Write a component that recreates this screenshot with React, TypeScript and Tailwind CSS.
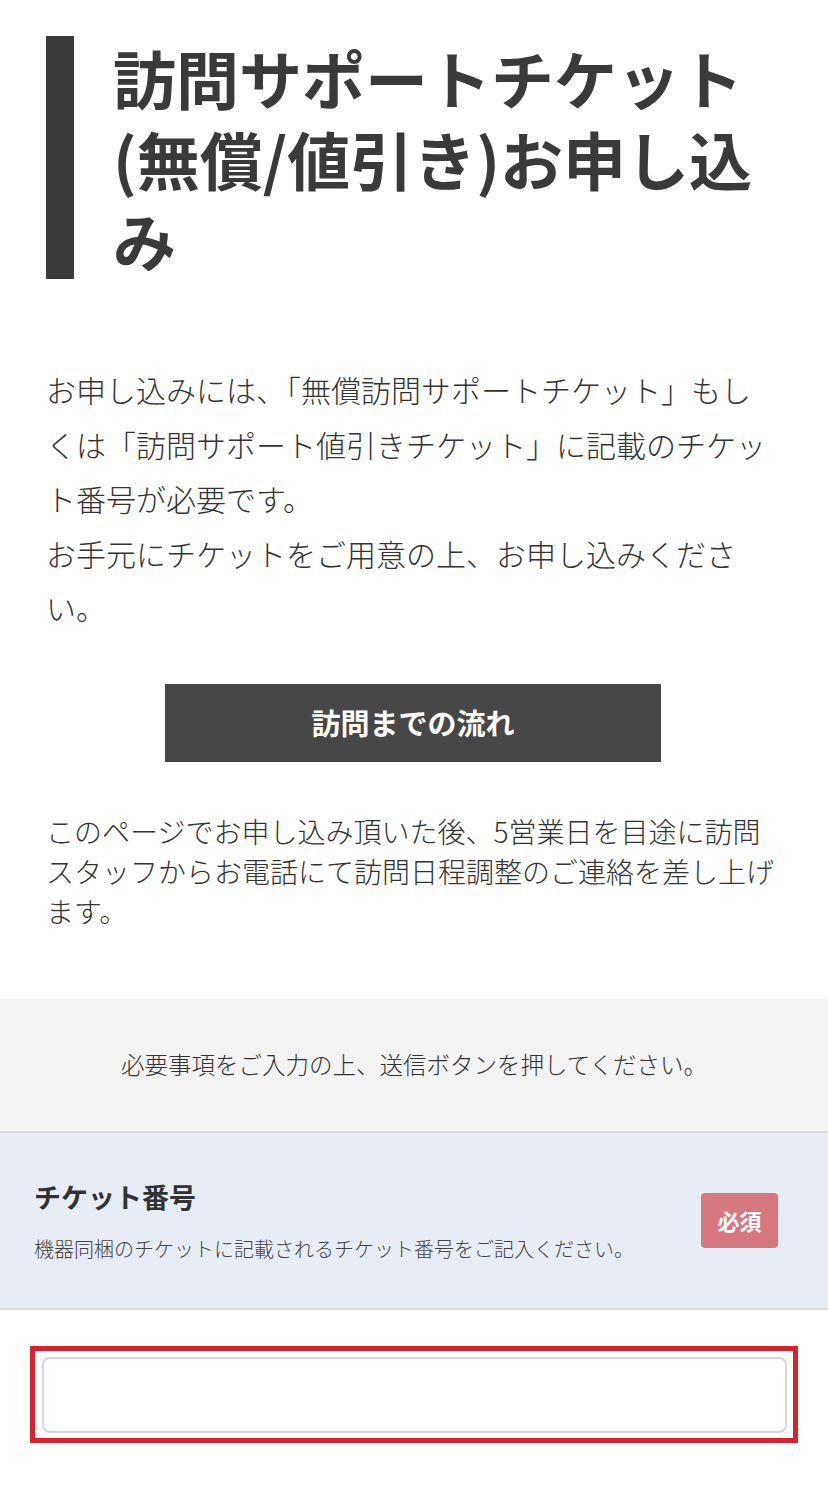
const App = () => {
  return (
    <main className="min-h-[1497px] w-[828px] bg-white font-['Noto_Sans_CJK_JP',sans-serif] text-[#333]">
      <section className="pl-[46px] pr-[48px] pt-[36px]">
        <h1 className="border-l-[28px] border-[#3c3939] pl-[39px] text-[63px] font-bold leading-[81px] text-[#3c3939]">
          訪問サポートチケット(無償/値引き)お申し込み
        </h1>

        <p className="mt-[83px] text-[30px] font-light leading-[54.5px] text-[#333]">
          お申し込みには、「無償訪問サポートチケット」もしくは「訪問サポート値引きチケット」に記載のチケット番号が必要です。
          <br />
          お手元にチケットをご用意の上、お申し込みください。
        </p>

        <div className="mt-[49px] flex justify-center">
          <button className="flex h-[78px] w-[496px] items-center justify-center bg-[#474747] text-[29px] font-bold text-white">
            訪問までの流れ
          </button>
        </div>

        <p className="mt-[49px] text-[28px] font-light leading-[40px] text-[#333]">
          このページでお申し込み頂いた後、5営業日を目途に訪問スタッフからお電話にて訪問日程調整のご連絡を差し上げます。
        </p>
      </section>

      <section className="mt-[68px] flex h-[134px] items-center justify-center border-b-2 border-[#dcdcdc] bg-[#f3f3f3]">
        <p className="text-[23.5px] font-light text-[#333]">必要事項をご入力の上、送信ボタンを押してください。</p>
      </section>

      <section className="flex h-[177px] items-center justify-between border-b-2 border-[#dcdcdc] bg-[#e8ecf5] pl-[34px] pr-[50px]">
        <div>
          <h2 className="text-[27px] font-bold leading-[40px] text-[#333]">チケット番号</h2>
          <p className="mt-[17px] text-[20px] font-light leading-[30px] text-[#444]">機器同梱のチケットに記載されるチケット番号をご記入ください。</p>
        </div>
        <span className="flex h-[55px] w-[77px] items-center justify-center rounded-[4px] bg-[#d57880] text-[22px] font-bold text-white">
          必須
        </span>
      </section>

      <section className="px-[30px] pt-[36px]">
        <div className="border-[5px] border-[#d1262f] pb-[5px] pl-[7px] pr-[6px] pt-[6px]">
          <input type="text" className="block h-[76px] w-full rounded-[8px] border-2 border-[#d4d8da] bg-white" />
        </div>
      </section>
    </main>
  );
};

export default App;
